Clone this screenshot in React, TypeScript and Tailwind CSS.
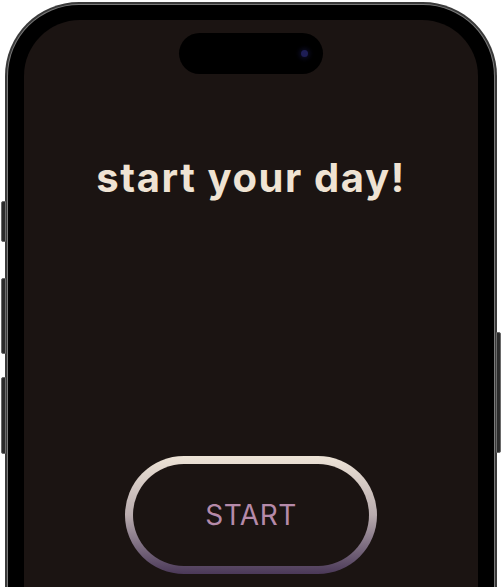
import React from "react";

export default function App() {
  return (
    <div className="relative w-[502px] h-[587px] overflow-hidden bg-white">
      {/* side buttons */}
      <div className="absolute left-[1px] top-[201px] w-[5px] h-[41px] rounded-l-[2px] bg-[#2a2a2a] border border-[#6a6a6a]" />
      <div className="absolute left-[1px] top-[278px] w-[5px] h-[76px] rounded-l-[2px] bg-[#2a2a2a] border border-[#6a6a6a]" />
      <div className="absolute left-[1px] top-[377px] w-[5px] h-[77px] rounded-l-[2px] bg-[#2a2a2a] border border-[#6a6a6a]" />
      <div className="absolute right-[1px] top-[332px] w-[5px] h-[121px] rounded-r-[2px] bg-[#2a2a2a] border border-[#6a6a6a]" />

      <div className="ml-[5px] mt-[2px] w-[492px] h-[660px] rounded-[74px] bg-[#3a3a3a] p-[2px]">
        <div className="w-full h-full rounded-[72px] bg-[#7a7a7a] p-[1px]">
          <div className="w-full h-full rounded-[71px] bg-black pt-[15px] px-[16px]">
            <div className="relative w-[454px] h-[640px] rounded-[56px] bg-[#1b1412] flex flex-col items-center">
              <div className="mt-[13px] w-[144px] h-[41px] rounded-full bg-black flex items-center justify-end pr-[15px]">
                <div className="w-[7px] h-[7px] rounded-full bg-[#1d1d55] shadow-[0_0_4px_2px_#0b0b22]" />
              </div>
              <h1
                className="mt-[81px] text-[40px] font-bold leading-[46px] tracking-[1.6px] text-[#efe3d3]"
                style={{ fontFamily: "Inter, 'Noto Sans', sans-serif" }}
              >
                start your day!
              </h1>
              <div className="mt-[255px] w-[252px] h-[118px] rounded-full bg-gradient-to-b from-[#eee4d7] via-[#b9acae] to-[#4b3958] p-[8px]">
                <div className="w-full h-full rounded-full bg-[#1b1412] flex items-center justify-center">
                  <span
                    className="text-[28px] text-[#b58aa9] leading-none tracking-[0.5px]"
                    style={{ fontFamily: "Inter, 'Noto Sans', sans-serif" }}
                  >
                    START
                  </span>
                </div>
              </div>
            </div>
          </div>
        </div>
      </div>
    </div>
  );
}
